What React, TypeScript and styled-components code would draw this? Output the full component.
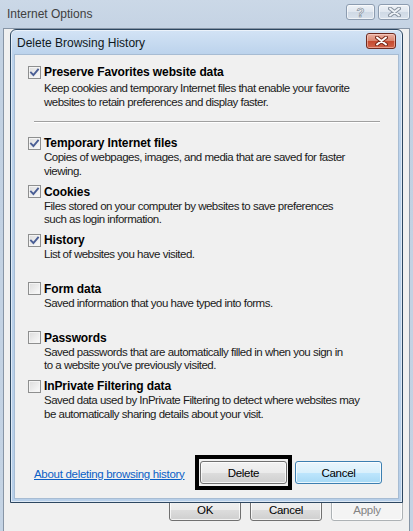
import React from 'react';
import styled, { createGlobalStyle } from 'styled-components';

const UI_FONT = '"Liberation Sans", Arial, sans-serif';

const GlobalStyle = createGlobalStyle`
  html, body {
    margin: 0;
    padding: 0;
    background: #c6d5e6;
  }
  body {
    width: 413px;
    height: 531px;
    overflow: hidden;
    font-family: ${UI_FONT};
  }
`;

const Window = styled.div`
  width: 413px;
  height: 531px;
  box-sizing: border-box;
  padding: 0 3px;
  display: flex;
  flex-direction: column;
  background: linear-gradient(#cbd8e7, #c2d1e2 40px, #c4d3e4);
  overflow: hidden;
`;

const WindowTitleBar = styled.div`
  height: 28px;
  flex: none;
  display: flex;
  align-items: flex-start;
  justify-content: space-between;
`;

const WindowTitle = styled.div`
  padding: 7px 0 0 4px;
  font-size: 12px;
  line-height: 14px;
  color: #404040;
`;

const CaptionGroup = styled.div`
  display: flex;
  gap: 3px;
  padding-top: 4px;
`;

const CaptionButton = styled.div<{ $wide?: boolean }>`
  width: ${(p) => (p.$wide ? 32 : 29)}px;
  height: 16px;
  box-sizing: border-box;
  border: 1px solid #8c9cb0;
  border-radius: 3px;
  background: linear-gradient(#eef2f7, #dfe6ef 50%, #cfd9e5 51%, #d9e2ec);
  box-shadow: inset 0 0 0 1px rgba(255, 255, 255, 0.6);
  display: flex;
  align-items: center;
  justify-content: center;
  font-size: 13px;
  font-weight: bold;
  color: #eef2f6;
  -webkit-text-stroke: 0.6px #7d8894;
`;

const ClientArea = styled.div`
  flex: 1;
  border: 1px solid #8795a6;
  border-bottom: none;
  background: #f0f0f0;
  display: flex;
  flex-direction: column;
`;

const Dialog = styled.div`
  position: relative;
  z-index: 1;
  margin: 0 6px;
  height: 474px;
  box-sizing: border-box;
  border: 1px solid #2d4761;
  border-radius: 6px 6px 0 0;
  background: linear-gradient(#d3e3f5, #bcd3ec 24px, #b7cfe9);
  box-shadow: inset 0 0 0 1px rgba(255, 255, 255, 0.55);
  padding: 0 3px 3px;
  display: flex;
  flex-direction: column;
`;

const DialogTitleBar = styled.div`
  height: 24px;
  flex: none;
  display: flex;
  align-items: flex-start;
  justify-content: space-between;
`;

const DialogTitle = styled.div`
  padding: 6px 0 0 3px;
  font-size: 12px;
  line-height: 14px;
  color: #101820;
`;

const CloseButton = styled.div`
  margin: 3px 3px 0 0;
  width: 30px;
  height: 16px;
  box-sizing: border-box;
  border: 1px solid #6e2a20;
  border-radius: 3px;
  background: linear-gradient(#eab1a4, #d98670 48%, #c54a30 52%, #d2644a);
  box-shadow: inset 0 0 0 1px rgba(255, 220, 210, 0.5);
  display: flex;
  align-items: center;
  justify-content: center;
`;

const DialogBody = styled.div`
  flex: 1;
  background: #f0f0f0;
  border: 1px solid #a7bcd3;
  display: flex;
  flex-direction: column;
  padding: 9px 16px 8px 13px;
`;

const OptionBlock = styled.div<{ $first?: boolean }>`
  height: ${(p) => (p.$first ? 'auto' : '48.67px')};
  flex: none;
`;

const OptionHeader = styled.div`
  height: 16px;
  display: flex;
  align-items: center;
  gap: 3px;
`;

const CheckBox = styled.div`
  width: 13px;
  height: 13px;
  box-sizing: border-box;
  border: 1px solid #8e8f8f;
  background: linear-gradient(135deg, #dcdcdc, #fbfbfb);
  box-shadow: inset 0 0 0 1px #f4f4f4;
  display: flex;
  align-items: center;
  justify-content: center;
`;

const OptionLabel = styled.div`
  font-size: 12px;
  font-weight: bold;
  letter-spacing: -0.1px;
  color: #000;
`;

const OptionDesc = styled.div<{ $first?: boolean }>`
  margin: ${(p) => (p.$first ? '1px' : '0')} 0 0 16px;
  font-size: 11.5px;
  letter-spacing: -0.5px;
  line-height: ${(p) => (p.$first ? '14px' : '13.5px')};
  color: #1a1a1a;
`;

const Separator = styled.div`
  margin: 12px 2px 12px 6px;
  border-top: 1px solid #a0a0a0;
  border-bottom: 1px solid #ffffff;
`;

const Footer = styled.div`
  margin-top: auto;
  display: flex;
  align-items: center;
  padding-left: 6px;
`;

const HelpLink = styled.a`
  font-size: 11.5px;
  letter-spacing: -0.3px;
  color: #0b5fc6;
  text-decoration: underline;
  cursor: pointer;
  margin-right: auto;
  padding-top: 2px;
`;

const DefaultFrame = styled.div`
  border: 4px solid #000;
  padding: 2px 1px;
  margin-right: 3px;
  display: flex;
`;

const PushButton = styled.div<{ $focused?: boolean; $disabled?: boolean; $w?: number; $h?: number }>`
  width: ${(p) => p.$w ?? 87}px;
  height: ${(p) => p.$h ?? 23}px;
  box-sizing: border-box;
  border: 1px solid ${(p) => (p.$focused ? '#3c7fb1' : p.$disabled ? '#adb2b5' : '#707070')};
  border-radius: 3px;
  background: ${(p) =>
    p.$focused
      ? 'linear-gradient(#eaf6fd, #d9f0fc 50%, #bee6fd 51%, #a7d9f5)'
      : p.$disabled
        ? '#f4f4f4'
        : 'linear-gradient(#f2f2f2, #ebebeb 50%, #dddddd 51%, #cfcfcf)'};
  box-shadow: inset 0 0 0 1px rgba(255, 255, 255, 0.75);
  display: flex;
  align-items: center;
  justify-content: center;
  font-size: 11.5px;
  letter-spacing: -0.3px;
  color: ${(p) => (p.$disabled ? '#838383' : '#000')};
`;

const BottomRow = styled.div`
  margin-top: -5px;
  display: flex;
  justify-content: flex-end;
  gap: 9px;
  padding-right: 6px;
`;

type Option = { label: string; desc: string[]; checked: boolean };

const OPTIONS: Option[] = [
  {
    label: 'Temporary Internet files',
    desc: ['Copies of webpages, images, and media that are saved for faster', 'viewing.'],
    checked: true,
  },
  {
    label: 'Cookies',
    desc: ['Files stored on your computer by websites to save preferences', 'such as login information.'],
    checked: true,
  },
  { label: 'History', desc: ['List of websites you have visited.'], checked: true },
  { label: 'Form data', desc: ['Saved information that you have typed into forms.'], checked: false },
  {
    label: 'Passwords',
    desc: ['Saved passwords that are automatically filled in when you sign in', "to a website you've previously visited."],
    checked: false,
  },
  {
    label: 'InPrivate Filtering data',
    desc: ['Saved data used by InPrivate Filtering to detect where websites may', 'be automatically sharing details about your visit.'],
    checked: false,
  },
];

const Check: React.FC<{ checked: boolean }> = ({ checked }) => (
  <CheckBox>
    {checked && (
      <svg width="11" height="11" viewBox="0 0 11 11">
        <path d="M2 5.6 L4.4 8 L9 2.6" fill="none" stroke="#4a5e95" strokeWidth="1.9" strokeLinecap="square" />
      </svg>
    )}
  </CheckBox>
);

const OptionItem: React.FC<Option & { first?: boolean }> = ({ label, desc, checked, first }) => (
  <OptionBlock $first={first}>
    <OptionHeader>
      <Check checked={checked} />
      <OptionLabel>{label}</OptionLabel>
    </OptionHeader>
    <OptionDesc $first={first}>
      {desc.map((line) => (
        <div key={line}>{line}</div>
      ))}
    </OptionDesc>
  </OptionBlock>
);

const XGlyph: React.FC<{ color: string; outline: string }> = ({ color, outline }) => (
  <svg width="13" height="10" viewBox="0 0 13 10">
    <path d="M2 1.5 L11 8.5 M11 1.5 L2 8.5" stroke={outline} strokeWidth="4" strokeLinecap="round" />
    <path d="M2 1.5 L11 8.5 M11 1.5 L2 8.5" stroke={color} strokeWidth="2" strokeLinecap="round" />
  </svg>
);

export default function App() {
  return (
    <>
      <GlobalStyle />
      <Window>
        <WindowTitleBar>
          <WindowTitle>Internet Options</WindowTitle>
          <CaptionGroup>
            <CaptionButton>?</CaptionButton>
            <CaptionButton $wide>
              <XGlyph color="#eef2f6" outline="#8893a0" />
            </CaptionButton>
          </CaptionGroup>
        </WindowTitleBar>
        <ClientArea>
          <Dialog>
            <DialogTitleBar>
              <DialogTitle>Delete Browsing History</DialogTitle>
              <CloseButton>
                <XGlyph color="#ffffff" outline="#7a2b1c" />
              </CloseButton>
            </DialogTitleBar>
            <DialogBody>
              <OptionItem
                first
                checked
                label="Preserve Favorites website data"
                desc={[
                  'Keep cookies and temporary Internet files that enable your favorite',
                  'websites to retain preferences and display faster.',
                ]}
              />
              <Separator />
              {OPTIONS.map((o) => (
                <OptionItem key={o.label} {...o} />
              ))}
              <Footer>
                <HelpLink>About deleting browsing history</HelpLink>
                <DefaultFrame>
                  <PushButton>Delete</PushButton>
                </DefaultFrame>
                <PushButton $focused>Cancel</PushButton>
              </Footer>
            </DialogBody>
          </Dialog>
          <BottomRow>
            <PushButton $w={72}>OK</PushButton>
            <PushButton $w={72}>Cancel</PushButton>
            <PushButton $w={72} $disabled>
              Apply
            </PushButton>
          </BottomRow>
        </ClientArea>
      </Window>
    </>
  );
}
